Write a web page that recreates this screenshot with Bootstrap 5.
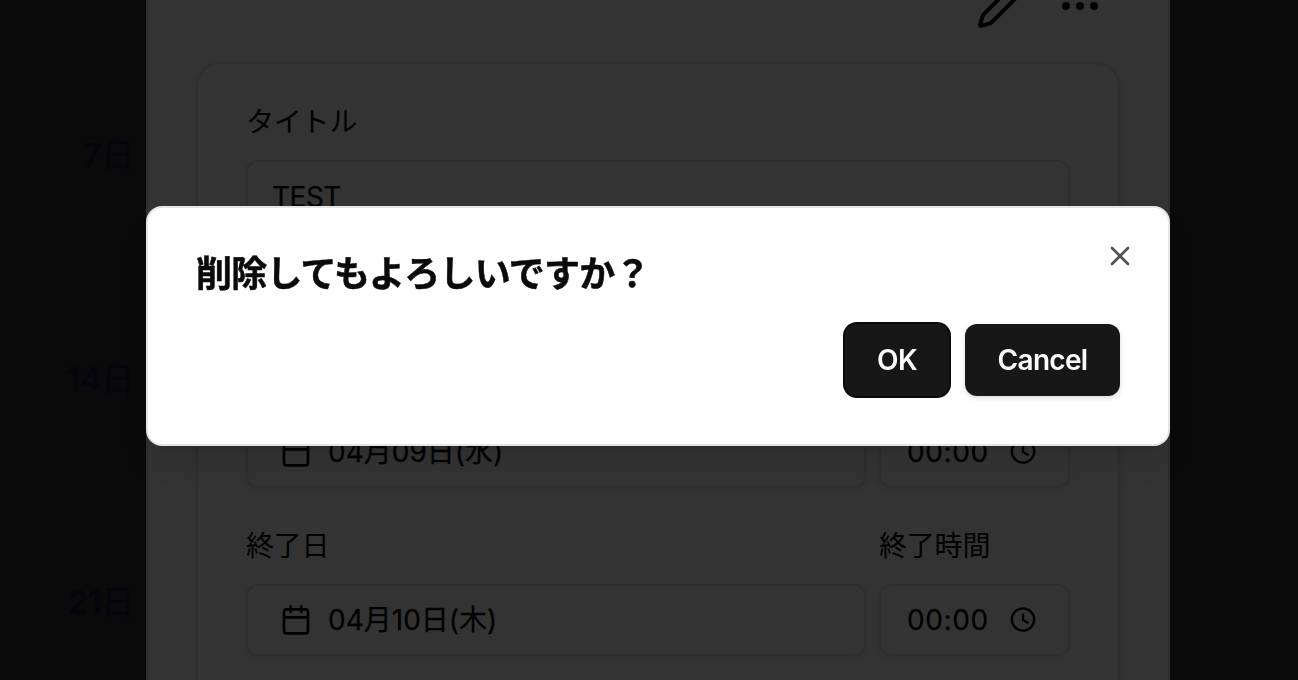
<!DOCTYPE html>
<html lang="ja">
<head>
  <meta charset="UTF-8">
  <meta name="viewport" content="width=device-width, initial-scale=1.0">
  <title>カレンダー</title>
  <link href="https://cdn.jsdelivr.net/npm/bootstrap@5.3.2/dist/css/bootstrap.min.css" rel="stylesheet">
  <style>
    body {
      background-color: #0a0a0a;
      color: #020202;
      font-family: Inter, "Noto Sans CJK JP", sans-serif;
      font-size: 28px;
      line-height: 40px;
      height: 680px;
      overflow: hidden;
    }
    .page {
      height: 680px;
    }
    .days {
      width: 146px;
      padding: 43px 12px 0 0;
      color: #05050d;
      font-size: 33px;
      font-weight: 600;
      letter-spacing: -.4px;
      text-align: right;
    }
    .days div {
      height: 223.5px;
      padding-top: 92px;
    }
    .days span {
      font-weight: 400;
    }
    .sheet {
      width: 1024px;
      height: 1200px;
      margin-top: -68px;
      padding: 48px;
      background-color: #333;
      border: 2px solid #2e2e2e;
    }
    .tools {
      gap: 32px;
      padding-right: 16px;
      margin-bottom: 32px;
    }
    .event-form {
      height: 1000px;
      padding: 38px 48px;
      border: 2px solid #2e2e2e;
      border-radius: 24px;
      box-shadow: 0 2px 6px rgba(0, 0, 0, .08);
    }
    .field-label {
      height: 40px;
      margin-bottom: 18px;
      letter-spacing: -.2px;
    }
    .field {
      height: 72px;
      border: 2px solid #2e2e2e;
      border-radius: 12px;
      box-shadow: 0 2px 4px rgba(0, 0, 0, .06);
      -webkit-text-stroke: .25px #020202;
    }
    .title-field {
      padding: 2px 24px 0;
      letter-spacing: -.5px;
    }
    .fields {
      display: grid;
      grid-template-columns: 620px 191px;
      column-gap: 13px;
    }
    .start-row {
      margin-top: 184px;
      margin-bottom: 38px;
    }
    .date-field {
      padding-left: 32px;
    }
    .time-field {
      padding-left: 26px;
    }
    .date-text {
      margin-left: 16px;
    }
    .time-text {
      width: 103px;
      letter-spacing: .6px;
    }
    .confirm {
      width: 1024px;
      max-width: none;
      margin: 206px 0 0 146px;
    }
    .confirm .modal-content {
      height: 240px;
      padding: 48px;
      color: #0a0a0a;
      border: 2px solid #e5e5e5;
      border-radius: 16px;
      background-clip: border-box;
      box-shadow: 0 20px 30px -6px rgba(0, 0, 0, .1), 0 8px 12px -8px rgba(0, 0, 0, .1);
    }
    .confirm h2 {
      font-size: 36px;
      font-weight: 700;
      line-height: 36px;
      letter-spacing: -.8px;
      -webkit-text-stroke: .5px #0a0a0a;
    }
    .close-btn {
      position: absolute;
      top: 32px;
      right: 32px;
      width: 32px;
      height: 32px;
      opacity: .7;
    }
    .answers {
      gap: 14px;
      margin-top: 32px;
    }
    .answers .btn {
      height: 72px;
      padding: 0;
      font-size: 28px;
      font-weight: 600;
      line-height: 72px;
      letter-spacing: -.7px;
      color: #fafafa;
      background-color: #171717;
      border: 0;
      border-radius: 12px;
      box-shadow: 0 2px 5px rgba(0, 0, 0, .15);
    }
    .answers .ok-btn {
      width: 104px;
      margin-right: 2px;
      box-shadow: 0 0 0 2px #0a0a0a;
    }
    .answers .cancel-btn {
      width: 155px;
    }
  </style>
</head>
<body>
  <div class="page d-flex align-items-start overflow-hidden">
    <!-- calendar column -->
    <div class="days flex-shrink-0">
      <div>7<span>日</span></div>
      <div>14<span>日</span></div>
      <div>21<span>日</span></div>
    </div>

    <!-- event sheet -->
    <div class="sheet flex-shrink-0">
      <div class="tools d-flex justify-content-end">
        <svg width="48" height="48" viewBox="0 0 24 24" fill="none" stroke="#000" stroke-width="2" stroke-linecap="round" stroke-linejoin="round"><path d="M21.174 6.812a1 1 0 0 0-3.986-3.987L3.842 16.174a2 2 0 0 0-.5.83l-1.321 4.352a.5.5 0 0 0 .623.622l4.353-1.32a2 2 0 0 0 .83-.497z"/></svg>
        <svg width="48" height="48" viewBox="0 0 24 24" fill="#000"><circle cx="5" cy="12" r="2"/><circle cx="12" cy="12" r="2"/><circle cx="19" cy="12" r="2"/></svg>
      </div>
      <div class="event-form">
        <div class="field-label">タイトル</div>
        <div class="field title-field d-flex align-items-center">TEST</div>

        <div class="fields start-row">
          <div class="field date-field d-flex align-items-center">
            <svg width="32" height="32" viewBox="0 0 24 24" fill="none" stroke="#000" stroke-width="2" stroke-linecap="round" stroke-linejoin="round"><path d="M8 2v4M16 2v4M3 10h18"/><rect width="18" height="18" x="3" y="4" rx="2"/></svg>
            <span class="date-text">04月09日(水)</span>
          </div>
          <div class="field time-field d-flex align-items-center">
            <span class="time-text">00:00</span>
            <svg width="26" height="26" viewBox="0 0 26 26" fill="none" stroke="#000" stroke-width="2.3"><circle cx="13" cy="12.5" r="11.2"/><path d="M13 6.5V13l5.5 3.2"/></svg>
          </div>
        </div>

        <div class="fields">
          <div class="field-label">終了日</div>
          <div class="field-label">終了時間</div>
          <div class="field date-field d-flex align-items-center">
            <svg width="32" height="32" viewBox="0 0 24 24" fill="none" stroke="#000" stroke-width="2" stroke-linecap="round" stroke-linejoin="round"><path d="M8 2v4M16 2v4M3 10h18"/><rect width="18" height="18" x="3" y="4" rx="2"/></svg>
            <span class="date-text">04月10日(木)</span>
          </div>
          <div class="field time-field d-flex align-items-center">
            <span class="time-text">00:00</span>
            <svg width="26" height="26" viewBox="0 0 26 26" fill="none" stroke="#000" stroke-width="2.3"><circle cx="13" cy="12.5" r="11.2"/><path d="M13 6.5V13l5.5 3.2"/></svg>
          </div>
        </div>
      </div>
    </div>
  </div>

  <!-- delete confirmation -->
  <div class="modal d-block overflow-hidden" tabindex="-1" role="dialog">
    <div class="modal-dialog confirm">
      <div class="modal-content">
        <h2 class="m-0">削除してもよろしいですか？</h2>
        <button type="button" class="close-btn btn p-0 border-0" aria-label="Close">
          <svg class="d-block" width="32" height="32" viewBox="0 0 24 24" fill="none" stroke="#0a0a0a" stroke-width="2" stroke-linecap="round"><path d="M18 6 6 18M6 6l12 12"/></svg>
        </button>
        <div class="answers d-flex justify-content-end">
          <button type="button" class="btn ok-btn">OK</button>
          <button type="button" class="btn cancel-btn">Cancel</button>
        </div>
      </div>
    </div>
  </div>

  <script src="https://cdn.jsdelivr.net/npm/bootstrap@5.3.2/dist/js/bootstrap.bundle.min.js"></script>
</body>
</html>
